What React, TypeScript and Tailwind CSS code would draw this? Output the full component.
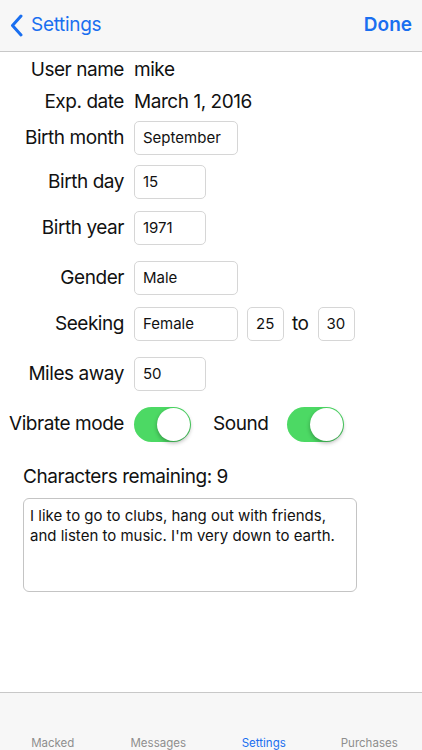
import React from 'react';

const font = { fontFamily: 'Inter, "Liberation Sans", sans-serif' };

const Box = ({ value, w }: { value: string; w: string }) => (
  <div className={`${w} h-[34px] flex items-center px-[8px] border border-[#d6d6d6] rounded-[5px] text-[15px] text-[#111]`}>
    {value}
  </div>
);

const Toggle = () => (
  <div className="w-[57px] h-[35px] rounded-full bg-[#4cd964] relative shrink-0">
    <div className="absolute right-[1px] top-[1px] w-[33px] h-[33px] rounded-full bg-white shadow-[0_2px_4px_rgba(0,0,0,0.3)]" />
  </div>
);

const Row = ({ label, children, className = '' }: { label: string; children?: React.ReactNode; className?: string }) => (
  <div className={`flex items-center gap-[10px] ${className}`}>
    <div className="w-[124px] text-right text-[19px] tracking-[-0.45px] text-[#111] whitespace-nowrap">{label}</div>
    {children}
  </div>
);

export default function App() {
  return (
    <div style={font} className="w-[422px] h-[750px] bg-white flex flex-col overflow-hidden">
      {/* nav bar */}
      <div className="h-[52px] shrink-0 bg-[#f7f7f7] border-b border-[#c8c8c8] flex items-center justify-between pl-[10px] pr-[10px] text-[#1a6ff0]">
        <div className="flex items-center gap-[8px]">
          <svg width="13" height="23" viewBox="0 0 13 23" fill="none">
            <path d="M11 2 L2.5 11.5 L11 21" stroke="#1a6ff0" strokeWidth="3" strokeLinecap="round" strokeLinejoin="round" />
          </svg>
          <span className="text-[19px] tracking-[-0.3px]">Settings</span>
        </div>
        <span className="text-[19px] font-semibold">Done</span>
      </div>

      <div className="flex-1 flex flex-col">
        <Row label="User name" className="h-[32px] mt-[2px]">
          <span className="text-[19px] tracking-[-0.45px] text-[#111]">mike</span>
        </Row>
        <Row label="Exp. date" className="h-[32px]">
          <span className="text-[19px] tracking-[-0.45px] text-[#111]">March 1, 2016</span>
        </Row>
        <Row label="Birth month" className="mt-[3px]">
          <Box value="September" w="w-[104px]" />
        </Row>
        <Row label="Birth day" className="mt-[10px]">
          <Box value="15" w="w-[72px]" />
        </Row>
        <Row label="Birth year" className="mt-[12px]">
          <Box value="1971" w="w-[72px]" />
        </Row>
        <Row label="Gender" className="mt-[16px]">
          <Box value="Male" w="w-[104px]" />
        </Row>
        <Row label="Seeking" className="mt-[12px]">
          <Box value="Female" w="w-[104px]" />
          <Box value="25" w="w-[37px] ml-[-1px]" />
          <span className="text-[19px] tracking-[-0.45px] text-[#111] ml-[-2px]">to</span>
          <Box value="30" w="w-[37px] ml-[-1px]" />
        </Row>
        <Row label="Miles away" className="mt-[16px]">
          <Box value="50" w="w-[72px]" />
        </Row>
        <div className="flex items-center mt-[16px] h-[35px]">
          <div className="w-[124px] text-right text-[19px] tracking-[-0.45px] text-[#111] whitespace-nowrap">Vibrate mode</div>
          <div className="ml-[10px]"><Toggle /></div>
          <span className="ml-[22px] text-[19px] tracking-[-0.45px] text-[#111]">Sound</span>
          <div className="ml-[19px]"><Toggle /></div>
        </div>

        <div className="ml-[23px] mt-[21px] text-[19px] tracking-[-0.45px] text-[#111]">Characters remaining: 9</div>
        <div className="ml-[23px] mt-[6px] w-[334px] h-[94px] border border-[#c4c4c4] rounded-[6px] px-[6px] py-[7px] text-[15px] leading-[20px] text-[#111]">
          I like to go to clubs, hang out with friends, and listen to music. I'm very down to earth.
        </div>
      </div>

      {/* tab bar */}
      <div className="h-[58px] shrink-0 bg-[#f7f7f7] border-t border-[#c8c8c8] grid grid-cols-4 items-end text-[11.5px] leading-[14px]">
        <div className="text-center text-[#8e8e8e]">Macked</div>
        <div className="text-center text-[#8e8e8e]">Messages</div>
        <div className="text-center text-[#1a6ff0]">Settings</div>
        <div className="text-center text-[#8e8e8e]">Purchases</div>
      </div>
    </div>
  );
}
